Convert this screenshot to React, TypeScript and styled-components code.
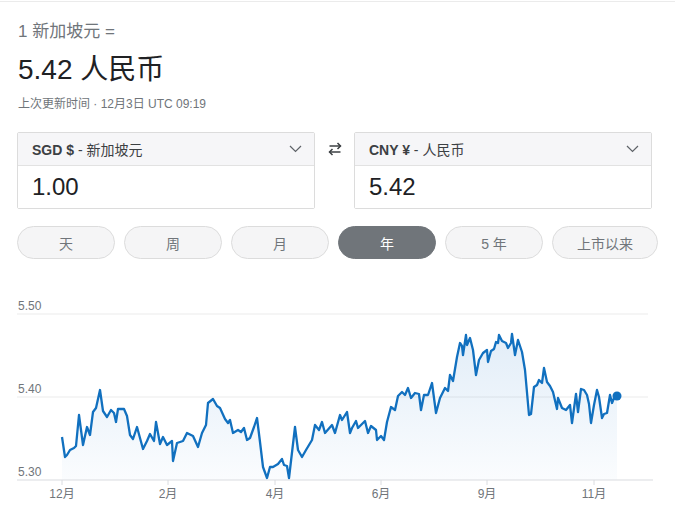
import React, { useState } from 'react';
import styled, { createGlobalStyle } from 'styled-components';

const GlobalStyle = createGlobalStyle`
  body {
    margin: 0;
    background: #ffffff;
    font-family: 'Liberation Sans', Arial, 'Noto Sans CJK SC', sans-serif;
  }
`;

const Page = styled.div`
  width: 675px;
  margin-top: 1px;
  border-top: 1px solid #ebebeb;
`;

const Summary = styled.div`
  padding: 20px 17px 0 18px;
`;

const FromLabel = styled.div`
  font-size: 17px;
  line-height: 20px;
  color: #70757a;
`;

const Rate = styled.div`
  margin-top: 10px;
  font-size: 28px;
  line-height: 36px;
  color: #202124;
`;

const Updated = styled.div`
  margin-top: 8px;
  font-size: 12px;
  line-height: 16px;
  color: #70757a;
`;

const Converter = styled.div`
  display: flex;
  align-items: flex-start;
  padding: 0 17px;
  margin-top: 20px;
`;

const CurrencyBox = styled.div`
  width: 296px;
  border: 1px solid #dcdcdc;
  border-radius: 2px;
`;

const CurrencySelect = styled.div`
  height: 33px;
  display: flex;
  align-items: center;
  justify-content: space-between;
  padding: 0 12px 1px 14px;
  box-sizing: border-box;
  background: #f6f6f8;
  border-bottom: 1px solid #e2e2e2;
  font-size: 14px;
  color: #3c4043;
  cursor: pointer;
`;

const Code = styled.b`
  font-weight: bold;
  color: #3c4043;
`;

const AmountInput = styled.input`
  display: block;
  width: 100%;
  box-sizing: border-box;
  height: 42px;
  padding: 0 14px;
  border: none;
  outline: none;
  background: #ffffff;
  font-family: inherit;
  font-size: 24px;
  color: #202124;
`;

const SwapArea = styled.div`
  width: 39px;
  height: 34px;
  display: flex;
  align-items: center;
  justify-content: center;
`;

const Ranges = styled.div`
  display: flex;
  gap: 9px;
  padding: 0 17px;
  margin-top: 17px;
`;

const RangeButton = styled.button<{ $active?: boolean }>`
  min-width: 98px;
  height: 33px;
  padding: 0 24px;
  border-radius: 17px;
  border: 1px solid ${p => (p.$active ? '#70757a' : '#dcdcdc')};
  background: ${p => (p.$active ? '#70757a' : '#f5f5f6')};
  color: ${p => (p.$active ? '#ffffff' : '#70757a')};
  font-family: inherit;
  font-size: 14px;
  cursor: pointer;
`;

const ChartWrap = styled.div`
  margin-top: 28px;
`;

const Chevron = () => (
  <svg width="13" height="8" viewBox="0 0 13 8">
    <polyline points="1,1 6.5,6.5 12,1" fill="none" stroke="#5f6368" strokeWidth="1.2" />
  </svg>
);

const SwapIcon = () => (
  <svg width="14" height="16" viewBox="0 0 14 16">
    <g fill="none" stroke="#3c4043" strokeWidth="1.5">
      <line x1="1.5" y1="5" x2="12.5" y2="5" />
      <polyline points="9.5,2 12.5,5 9.5,8" />
      <line x1="1.5" y1="11" x2="12.5" y2="11" />
      <polyline points="4.5,8 1.5,11 4.5,14" />
    </g>
  </svg>
);

const pts: [number, number][] = [
  [62, 437], [65, 457], [67, 455], [70, 450], [74, 448], [76, 446], [79, 415], [83, 445], [87, 427], [90, 435],
  [93, 412], [96, 408], [100, 390], [103, 411], [107, 417], [111, 410], [114, 413], [116, 422], [118, 409], [124, 409],
  [127, 416], [130, 435], [133, 439], [137, 427], [143, 449], [147, 441], [150, 434], [154, 441], [156, 422], [160, 444],
  [163, 437], [167, 445], [172, 441], [173, 461], [177, 443], [183, 441], [187, 433], [193, 436], [198, 447], [202, 433],
  [206, 425], [208, 403], [213, 399], [217, 406], [220, 408], [225, 419], [228, 423], [230, 420], [233, 433], [238, 430],
  [241, 432], [244, 428], [247, 440], [250, 438], [254, 427], [257, 418], [260, 442], [263, 467], [267, 478], [270, 467],
  [273, 467], [278, 464], [282, 459], [284, 465], [287, 466], [289, 478], [295, 427], [298, 450], [302, 457], [306, 450],
  [312, 440], [315, 425], [319, 430], [322, 422], [325, 433], [332, 425], [335, 433], [340, 415], [342, 420], [347, 412],
  [350, 433], [352, 428], [356, 421], [358, 428], [365, 421], [368, 433], [371, 426], [376, 430], [377, 440], [381, 436],
  [384, 440], [387, 422], [391, 407], [395, 410], [398, 396], [402, 392], [405, 395], [408, 388], [411, 398], [415, 393],
  [419, 394], [421, 410], [424, 395], [428, 395], [432, 383], [436, 413], [440, 398], [445, 388], [448, 391], [450, 375],
  [453, 381], [457, 357], [460, 343], [462, 346], [463, 355], [466, 335], [467, 345], [470, 338], [473, 350], [476, 375],
  [479, 360], [483, 353], [487, 350], [488, 362], [491, 351], [494, 349], [496, 342], [498, 343], [499, 335], [502, 341],
  [506, 343], [508, 348], [511, 343], [512, 334], [515, 355], [518, 340], [522, 352], [525, 370], [529, 415], [531, 414],
  [534, 387], [537, 385], [539, 380], [542, 383], [544, 368], [547, 382], [550, 386], [553, 392], [557, 409], [558, 398],
  [562, 408], [566, 410], [570, 405], [572, 423], [576, 394], [578, 412], [581, 389], [584, 390], [587, 395], [589, 404],
  [591, 423], [594, 405], [597, 390], [599, 397], [602, 418], [604, 414], [607, 413], [610, 395], [612, 403], [614, 398],
  [617, 396],
];

const yTicks = [
  { label: '5.50', y: 314 },
  { label: '5.40', y: 397 },
  { label: '5.30', y: 480 },
];

const xTicks = [
  { label: '12月', x: 62 },
  { label: '2月', x: 168 },
  { label: '4月', x: 275 },
  { label: '6月', x: 381 },
  { label: '9月', x: 487 },
  { label: '11月', x: 594 },
];

const RateChart = () => {
  const line = pts.map(([x, y], i) => `${i ? 'L' : 'M'}${x} ${y}`).join(' ');
  const last = pts[pts.length - 1];
  const area = `${line} L${last[0]} 480 L${pts[0][0]} 480 Z`;

  return (
    <svg width="675" height="231" viewBox="0 287 675 231" style={{ display: 'block' }}>
      <defs>
        <linearGradient id="fill" x1="0" y1="330" x2="0" y2="480" gradientUnits="userSpaceOnUse">
          <stop offset="0" stopColor="#1a73c8" stopOpacity="0.13" />
          <stop offset="1" stopColor="#1a73c8" stopOpacity="0.02" />
        </linearGradient>
      </defs>
      {yTicks.slice(0, 2).map(t => (
        <line key={t.label} x1="17" y1={t.y} x2="648" y2={t.y} stroke="#ebebeb" strokeWidth="1" />
      ))}
      {yTicks.map(t => (
        <text key={t.label} x="18" y={t.y - 4.5} fontSize="12" fill="#70757a"
          fontFamily="'Liberation Sans', Arial, sans-serif">{t.label}</text>
      ))}
      <path d={area} fill="url(#fill)" />
      <line x1="17" y1="480" x2="653" y2="480" stroke="#dadce0" strokeWidth="1.2" />
      {xTicks.map(t => (
        <g key={t.label}>
          <line x1={t.x} y1="480" x2={t.x} y2="485" stroke="#dadce0" strokeWidth="1" />
          <text x={t.x} y="498" fontSize="12" fill="#70757a" textAnchor="middle"
            fontFamily="'Liberation Sans', Arial, 'Noto Sans CJK SC', sans-serif">{t.label}</text>
        </g>
      ))}
      <path d={line} fill="none" stroke="#1170bf" strokeWidth="2.3" strokeLinejoin="round" />
      <circle cx={last[0]} cy={last[1]} r="4.5" fill="#1170bf" />
    </svg>
  );
};

const ranges = ['天', '周', '月', '年', '5 年', '上市以来'];

export default function App() {
  const [from, setFrom] = useState('1.00');
  const [to, setTo] = useState('5.42');
  const [range, setRange] = useState('年');

  return (
    <>
      <GlobalStyle />
      <Page>
        <Summary>
          <FromLabel>1 新加坡元 =</FromLabel>
          <Rate>5.42 人民币</Rate>
          <Updated>上次更新时间 · 12月3日 UTC 09:19</Updated>
        </Summary>

        <Converter>
          <CurrencyBox>
            <CurrencySelect>
              <span><Code>SGD $</Code> - 新加坡元</span>
              <Chevron />
            </CurrencySelect>
            <AmountInput value={from} onChange={e => setFrom(e.target.value)} />
          </CurrencyBox>
          <SwapArea><SwapIcon /></SwapArea>
          <CurrencyBox>
            <CurrencySelect>
              <span><Code>CNY ¥</Code> - 人民币</span>
              <Chevron />
            </CurrencySelect>
            <AmountInput value={to} onChange={e => setTo(e.target.value)} />
          </CurrencyBox>
        </Converter>

        <Ranges>
          {ranges.map(r => (
            <RangeButton key={r} $active={range === r} onClick={() => setRange(r)}>{r}</RangeButton>
          ))}
        </Ranges>

        <ChartWrap>
          <RateChart />
        </ChartWrap>
      </Page>
    </>
  );
}
